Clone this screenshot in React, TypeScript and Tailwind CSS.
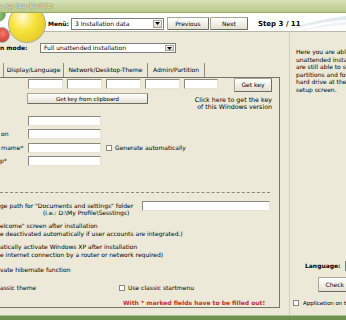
import type { ReactNode } from "react";

function Field({ className = "" }: { className?: string }) {
  return (
    <div
      className={`h-[10px] shrink-0 bg-white border border-t-[#8d8a7d] border-l-[#8d8a7d] border-b-[#e6e3d7] border-r-[#e6e3d7] ${className}`}
    />
  );
}

function Check() {
  return <div className="w-[6px] h-[6px] shrink-0 bg-white border border-[#8d8a7d]" />;
}

function Select({ value, className = "" }: { value: string; className?: string }) {
  return (
    <div className={`flex items-center shrink-0 bg-white border border-[#7d7d78] ${className}`}>
      <span className="flex-1 pl-[3px] whitespace-nowrap overflow-hidden">{value}</span>
      <span className="w-[9px] self-stretch m-[1px] flex items-center justify-center bg-gradient-to-b from-[#fbfaf6] to-[#dcd8c8] border border-[#a9a698]">
        <svg width="5" height="3" viewBox="0 0 5 3" aria-hidden="true">
          <path d="M0 0h5L2.5 3z" fill="#000" />
        </svg>
      </span>
    </div>
  );
}

function Btn({ children, className = "" }: { children: ReactNode; className?: string }) {
  return (
    <div
      className={`flex items-center justify-center shrink-0 whitespace-nowrap rounded-[1px] bg-gradient-to-b from-white to-[#e4e1d3] border border-[#aaa796] border-r-[#6f6d63] border-b-[#6f6d63] ${className}`}
    >
      {children}
    </div>
  );
}

// glossy balls of the logo; the title bar sits above them and cuts their tops
function Logo() {
  return (
    <div className="relative w-[48px] self-stretch shrink-0 pointer-events-none z-10">
      <div className="absolute -left-[10px] -top-[7px] w-[16px] h-[16px] rounded-full border border-[#a8a8a0] bg-radial-[at_50%_60%] from-[#9cd27a] to-[#3f8a2c]" />
      <div className="absolute -left-[6px] top-[14px] w-[16px] h-[16px] rounded-full border border-[#a8a8a0] bg-radial-[at_55%_40%] from-[#f47a68] to-[#c42424]" />
      <div className="absolute left-[8px] -top-[8px] w-[38px] h-[38px] rounded-full border-[1.5px] border-[#a9a9a1] bg-radial-[at_38%_30%] from-[#fffbd8] via-[#f7e33c] via-40% to-[#dcbc1c]" />
    </div>
  );
}

const TABS = [
  { label: "Display/Language", w: "w-[60px]" },
  { label: "Network/Desktop-Theme", w: "w-[84px]" },
  { label: "Admin/Partition", w: "w-[58px]" },
];

const INFO = [
  "Here you are able to",
  "unattended installation",
  "are still able to set",
  "partitions and format",
  "hard drive at the",
  "setup screen.",
];

export default function App() {
  return (
    <div className="relative w-[346px] h-[320px] overflow-hidden flex flex-col bg-[#ece9d8] text-black text-[6px] leading-[8px] font-['DejaVu_Sans',sans-serif]">
      {/* title bar */}
      <div className="relative z-20 h-[13px] shrink-0 flex items-center bg-gradient-to-b from-[#d7e1b8] to-[#b8c88b] border-b border-[#98ac68]">
        <span className="-ml-[2px] whitespace-nowrap text-[8px] leading-[8px] text-[#f5f7ea] [text-shadow:0_0_1px_#5d6e40,0_0_1px_#5d6e40] font-['Liberation_Sans',sans-serif]">
          e xp-Iso-Builder
        </span>
      </div>

      {/* header */}
      <div className="relative h-[19px] shrink-0 flex items-center bg-white border-b border-[#bbb8a8]">
        <Logo />
        <div className="flex items-center pt-[3px]">
          <span className="font-bold">Menü:</span>
          <Select className="ml-[2px] w-[93px] h-[12px]" value="3 Installation data" />
          <Btn className="ml-[3px] w-[42px] h-[13px]">Previous</Btn>
          <Btn className="ml-[1px] w-[38px] h-[13px]">Next</Btn>
          <span className="ml-[10px] font-bold text-[7px]">Step 3 / 11</span>
        </div>
        <svg className="absolute right-0 top-0" width="60" height="18" viewBox="0 0 60 18" aria-hidden="true">
          <path d="M0 17C18 11 38 5 60 3v4C40 8 20 13 0 17z" fill="#e3ebf0" />
          <path d="M14 18C30 13 46 10 60 9v3C46 12 30 15 14 18z" fill="#edf2f5" />
        </svg>
      </div>

      {/* main */}
      <div className="flex flex-1 min-h-0">
        {/* left side */}
        <div className="w-[289px] shrink-0 flex flex-col">
          <div className="mt-[11px] h-[10px] flex items-center">
            <span className="w-[40px] font-bold whitespace-nowrap">n mode:</span>
            <Select className="w-[136px] h-full" value="Full unattended installation" />
          </div>

          <div className="mt-[10px] h-[14px] flex pl-[3px]">
            {TABS.map((t, i) => (
              <div
                key={t.label}
                className={`${t.w} flex items-center justify-center whitespace-nowrap border-l border-[#8e8b7e] ${
                  i === TABS.length - 1 ? "border-r" : ""
                }`}
              >
                {t.label}
              </div>
            ))}
          </div>

          <div className="w-[280px] h-[231px] overflow-hidden flex flex-col border-t border-r border-b border-[#77756a] whitespace-nowrap">
            {/* product key */}
            <div className="h-[37px] shrink-0 flex">
              <div className="w-[218px] shrink-0 pl-[27px] pt-[1px] flex flex-col">
                <div className="ml-[1px] flex gap-[4px]">
                  <Field className="w-[35px]" />
                  <Field className="w-[35px]" />
                  <Field className="w-[35px]" />
                  <Field className="w-[35px]" />
                  <Field className="w-[34px]" />
                </div>
                <Btn className="mt-[4px] w-[121px] h-[11px] text-[5.5px]">Get key from clipboard</Btn>
              </div>
              <div className="flex-1 min-w-0 pr-[7px] flex flex-col items-end">
                <Btn className="w-[38px] h-[14px]">Get key</Btn>
                <p className="mt-[5px] leading-[6.5px] text-right text-[6.3px]">
                  Click here to get the key
                  <br />
                  of this Windows version
                </p>
              </div>
            </div>

            {/* user data */}
            <div className="mt-[1px] h-[10px] flex items-center">
              <span className="w-[28px]" />
              <Field className="w-[73px]" />
            </div>
            <div className="mt-[3px] h-[10px] flex items-center">
              <span className="w-[28px] pl-[1px]">on</span>
              <Field className="w-[73px]" />
            </div>
            <div className="mt-[4px] h-[10px] flex items-center">
              <span className="w-[28px] pl-[1px]">rname*</span>
              <Field className="w-[73px]" />
              <span className="ml-[5px]">
                <Check />
              </span>
              <span className="ml-[3px]">Generate automatically</span>
            </div>
            <div className="mt-[3px] h-[10px] flex items-center">
              <span className="w-[28px]">p*</span>
              <Field className="w-[73px]" />
            </div>

            <div className="mt-[26px] w-[270px] border-t border-dashed border-[#8c8a80]" />

            <div className="mt-[8px] h-[10px] flex items-center">
              <span className="w-[142px] overflow-hidden">ge path for "Documents and settings" folder</span>
              <Field className="w-[128px]" />
            </div>
            <p className="-mt-[1px] pl-[43px] leading-[6px]">(i.e.: D:\My Profile\Sesstings)</p>

            <p className="mt-[6px]">
              elcome" screen after installation
              <br />
              e deactivated automatically if user accounts are integrated.)
            </p>
            <p className="mt-[5px]">
              atically activate Windows XP after installation
              <br />
              e internet connection by a router or network required)
            </p>
            <p className="mt-[7px]">vate hibernate function</p>

            <div className="mt-[10px] h-[8px] flex items-center">
              <span className="w-[119px]">assic theme</span>
              <Check />
              <span className="ml-[3px]">Use classic startmenu</span>
            </div>

            <p className="mt-[8px] pl-[123px] leading-[6px] font-bold text-[#c8302c]">
              With * marked fields have to be filled out!
            </p>
          </div>
        </div>

        {/* right side */}
        <div className="flex-1 min-w-0 overflow-hidden flex flex-col pb-[8px] border-l border-[#d3cfbf] whitespace-nowrap">
          <div className="pl-[6px] pt-[16px] leading-[7.5px]">
            {INFO.map((l) => (
              <div key={l}>{l}</div>
            ))}
          </div>
          <div className="flex-1" />
          <div className="h-[10px] flex items-center pl-[15px]">
            <span className="font-bold">Language:</span>
            <Select className="ml-[4px] w-[40px] h-full" value="English" />
          </div>
          <Btn className="mt-[6px] ml-[28px] w-[70px] h-[15px]">Check for updates</Btn>
          <div className="mt-[7px] h-[8px] flex items-center pl-[3px]">
            <Check />
            <span className="ml-[4px] text-[5.5px]">Application on top</span>
          </div>
        </div>
      </div>

      {/* status strip */}
      <div className="h-[5px] shrink-0 bg-[#6d9150] border-t border-[#a9c18c]" />
    </div>
  );
}
